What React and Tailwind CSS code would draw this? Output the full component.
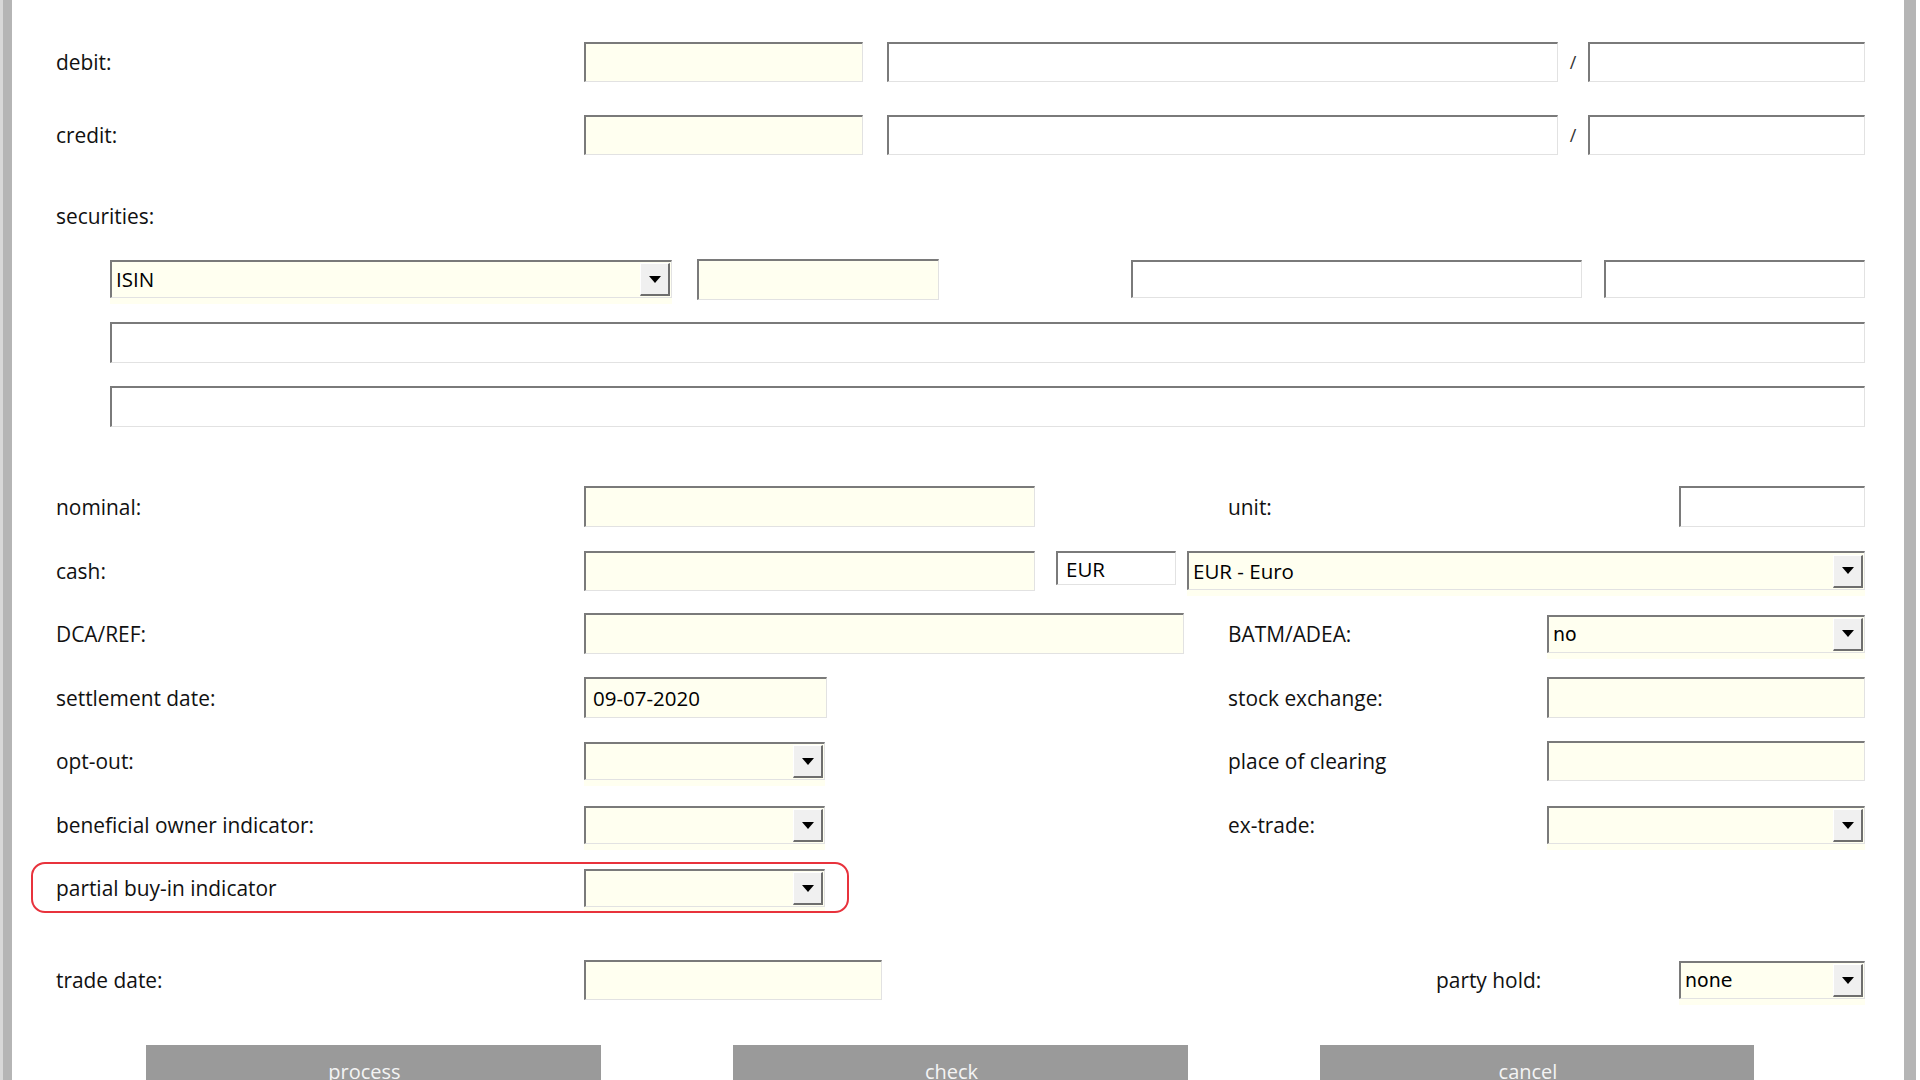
import React from "react";

const BORDER =
  "border-t-2 border-l-2 border-r border-b border-t-[#7a7a7a] border-l-[#7a7a7a] border-r-[#e2e2e2] border-b-[#e2e2e2]";

function Label({ className = "w-[528px]", children }) {
  return (
    <div className={`${className} shrink-0 text-[20.9px] leading-[28px] text-[#111] whitespace-nowrap`}>
      {children}
    </div>
  );
}

function Field({ className = "", yellow = false, value, pad = "pl-[7px]" }) {
  return (
    <div
      className={`${className} shrink-0 flex items-center ${BORDER} ${yellow ? "bg-[#fffff0]" : "bg-white"} ${pad} text-[20.5px] leading-[28px] text-black`}
    >
      {value}
    </div>
  );
}

function Arrow() {
  return (
    <div className="w-[30px] h-[33px] mr-[1px] shrink-0 flex items-center justify-center bg-[#f0f0f0] border-t border-l border-r-2 border-b-2 border-t-white border-l-white border-r-[#6e6e6e] border-b-[#6e6e6e]">
      <svg width="12" height="7" viewBox="0 0 12 7">
        <path d="M0 0 H12 L6 7 Z" fill="#000" />
      </svg>
    </div>
  );
}

function Select({ className = "", value, dejavu = false }) {
  return (
    <div
      className={`${className} h-[38px] shrink-0 flex items-center ${BORDER} bg-[#fffff0] shadow-[0_6px_0_0_#fffff0]`}
    >
      <span
        className={`flex-1 pl-[4px] text-black whitespace-nowrap ${
          dejavu ? "font-['DejaVu_Sans',sans-serif] text-[19px]" : "text-[20.5px]"
        }`}
      >
        {value}
      </span>
      <Arrow />
    </div>
  );
}

function Button({ className = "", children }) {
  return (
    <div
      className={`${className} h-[60px] shrink-0 bg-[#9a9a9a] flex justify-center pt-[13px] pr-[18px] text-[20px] leading-[28px] text-[#f4f4f4]`}
    >
      {children}
    </div>
  );
}

export default function App() {
  return (
    <div className="w-[1920px] h-[1080px] overflow-hidden bg-white flex font-['Open_Sans',sans-serif]">
      <div className="w-[12px] shrink-0 bg-[#b5b5b5] border-l-[3px] border-l-[#d8d8d8]" />

      <div className="flex-1 flex flex-col pl-[44px] pt-[42px] relative">
        {/* debit */}
        <div className="flex items-center h-[40px]">
          <Label>debit:</Label>
          <Field className="w-[279px] h-[40px]" yellow />
          <Field className="ml-[24px] w-[671px] h-[40px]" />
          <span className="w-[30px] text-center text-[18px] text-[#333]">/</span>
          <Field className="w-[277px] h-[40px]" />
        </div>

        {/* credit */}
        <div className="flex items-center h-[40px] mt-[33px]">
          <Label>credit:</Label>
          <Field className="w-[279px] h-[40px]" yellow />
          <Field className="ml-[24px] w-[671px] h-[40px]" />
          <span className="w-[30px] text-center text-[18px] text-[#333]">/</span>
          <Field className="w-[277px] h-[40px]" />
        </div>

        {/* securities */}
        <div className="flex items-center h-[28px] mt-[47px]">
          <Label>securities:</Label>
        </div>

        <div className="flex items-center h-[40px] mt-[29px] pl-[54px]">
          <Select className="w-[562px]" value="ISIN" />
          <Field className="ml-[25px] w-[242px] h-[41px]" yellow />
          <Field className="ml-[192px] w-[451px] h-[38px]" />
          <Field className="ml-[22px] w-[261px] h-[38px]" />
        </div>

        <div className="flex items-center h-[41px] mt-[23px] pl-[54px]">
          <Field className="w-[1755px] h-[41px]" />
        </div>
        <div className="flex items-center h-[41px] mt-[23px] pl-[54px]">
          <Field className="w-[1755px] h-[41px]" />
        </div>

        {/* nominal */}
        <div className="flex items-center h-[41px] mt-[59px]">
          <Label>nominal:</Label>
          <Field className="w-[451px] h-[41px]" yellow />
          <Label className="ml-[193px] w-[451px]">unit:</Label>
          <Field className="w-[186px] h-[41px]" />
        </div>

        {/* cash */}
        <div className="flex items-start h-[40px] mt-[24px]">
          <div className="self-center">
            <Label>cash:</Label>
          </div>
          <Field className="w-[451px] h-[40px]" yellow />
          <Field className="ml-[21px] w-[120px] h-[34px] bg-[#fdfdf4]" value="EUR" pad="pl-[8px]" />
          <Select className="ml-[11px] w-[678px] !h-[39px]" value="EUR - Euro" />
        </div>

        {/* DCA/REF */}
        <div className="flex items-center h-[41px] mt-[22px]">
          <Label>DCA/REF:</Label>
          <Field className="w-[600px] h-[41px]" yellow />
          <Label className="ml-[44px] w-[319px]">BATM/ADEA:</Label>
          <Select className="w-[318px]" value="no" dejavu />
        </div>

        {/* settlement date */}
        <div className="flex items-center h-[41px] mt-[23px]">
          <Label>settlement date:</Label>
          <Field className="w-[243px] h-[41px]" yellow value="09-07-2020" />
          <Label className="ml-[401px] w-[319px]">stock exchange:</Label>
          <Field className="w-[318px] h-[41px]" yellow />
        </div>

        {/* opt-out */}
        <div className="flex items-center h-[40px] mt-[23px]">
          <Label>opt-out:</Label>
          <Select className="w-[241px]" />
          <Label className="ml-[403px] w-[319px]">place of clearing</Label>
          <Field className="w-[318px] h-[40px]" yellow />
        </div>

        {/* beneficial owner indicator */}
        <div className="flex items-center h-[40px] mt-[25px]">
          <Label>beneficial owner indicator:</Label>
          <Select className="w-[241px]" />
          <Label className="ml-[403px] w-[319px]">ex-trade:</Label>
          <Select className="w-[318px]" />
        </div>

        {/* partial buy-in indicator */}
        <div className="flex items-center h-[40px] mt-[25px] relative">
          <div className="absolute left-[-25px] top-[-7px] w-[818px] h-[51px] rounded-[14px] border-2 border-[#e8323c]" />
          <Label>partial buy-in indicator</Label>
          <Select className="w-[241px]" />
        </div>

        {/* trade date */}
        <div className="flex items-center h-[40px] mt-[53px]">
          <Label>trade date:</Label>
          <Field className="w-[298px] h-[40px]" yellow />
          <Label className="ml-[554px] w-[243px]">party hold:</Label>
          <Select className="w-[186px]" value="none" dejavu />
        </div>

        {/* buttons */}
        <div className="flex mt-[45px]">
          <Button className="ml-[90px] w-[455px]">process</Button>
          <Button className="ml-[132px] w-[455px]">check</Button>
          <Button className="ml-[132px] w-[434px]">cancel</Button>
        </div>
      </div>

      <div className="w-[12px] shrink-0 bg-[#b5b5b5]" />
      <div className="w-[4px] shrink-0 bg-white" />
    </div>
  );
}
